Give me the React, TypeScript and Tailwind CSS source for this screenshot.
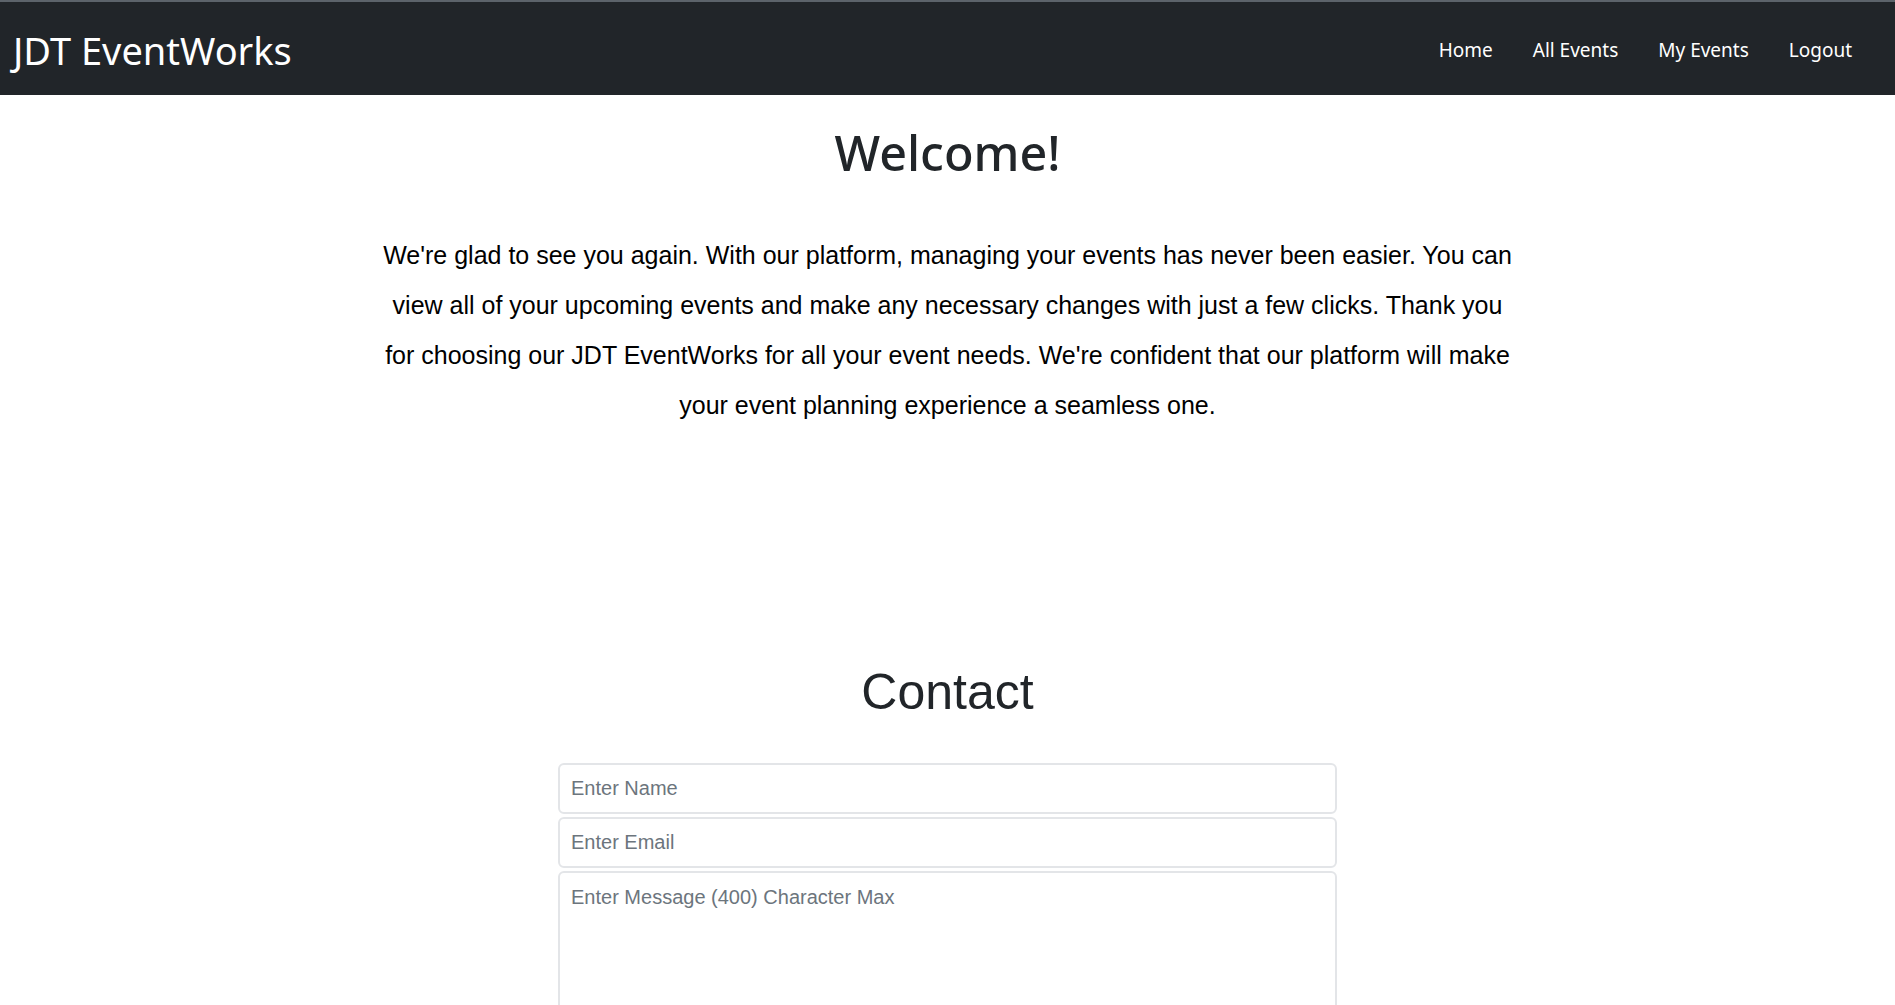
import React from "react";

const navLinks = ["Home", "All Events", "My Events", "Logout"];

const intro = [
  "We're glad to see you again. With our platform, managing your events has never been easier. You can",
  "view all of your upcoming events and make any necessary changes with just a few clicks. Thank you",
  "for choosing our JDT EventWorks for all your event needs. We're confident that our platform will make",
  "your event planning experience a seamless one.",
];

function Navbar() {
  return (
    <nav className="flex h-[95px] items-center justify-between border-t-2 border-[#5c636a] bg-[#212529] pl-[13px] pr-[23px] pt-[3px]">
      <a className="text-[38px] leading-none text-white" style={{ fontFamily: "'Noto Sans', sans-serif" }}>
        JDT EventWorks
      </a>
      <ul className="flex items-center" style={{ fontFamily: "'Noto Sans', sans-serif" }}>
        {navLinks.map((link) => (
          <li key={link}>
            <a className="block px-[20px] py-2 text-[19px] text-white">{link}</a>
          </li>
        ))}
      </ul>
    </nav>
  );
}

function Welcome() {
  return (
    <section className="flex flex-col items-center">
      <h1
        className="mt-[27px] text-[48.5px] font-medium leading-[60px] text-[#212529]"
        style={{ fontFamily: "'Noto Sans', sans-serif" }}
      >
        Welcome!
      </h1>
      <p
        className="mt-[48px] w-[1200px] text-center text-[25px] leading-[50px] text-black"
        style={{ fontFamily: "'Liberation Sans', Arial, sans-serif" }}
      >
        {intro.map((line) => (
          <span key={line} className="block whitespace-nowrap">
            {line}
          </span>
        ))}
      </p>
    </section>
  );
}

function Contact() {
  const field =
    "w-full rounded-[6px] border-2 border-[#e3e5e8] bg-white px-[11px] text-[20px] text-[#212529] outline-none placeholder:text-[#6c757d]";
  return (
    <section className="mt-[232px] flex flex-col items-center" style={{ fontFamily: "'Liberation Sans', Arial, sans-serif" }}>
      <h2 className="text-[50px] leading-[60px] text-[#212529]">Contact</h2>
      <form className="mt-[41px] flex w-[779px] flex-col gap-[3px]">
        <input className={`${field} h-[51px]`} placeholder="Enter Name" />
        <input className={`${field} h-[51px]`} placeholder="Enter Email" />
        <textarea className={`${field} h-[220px] resize-none py-[9px]`} placeholder="Enter Message (400) Character Max" />
      </form>
    </section>
  );
}

export default function App() {
  return (
    <div className="min-h-screen bg-white">
      <Navbar />
      <Welcome />
      <Contact />
    </div>
  );
}
